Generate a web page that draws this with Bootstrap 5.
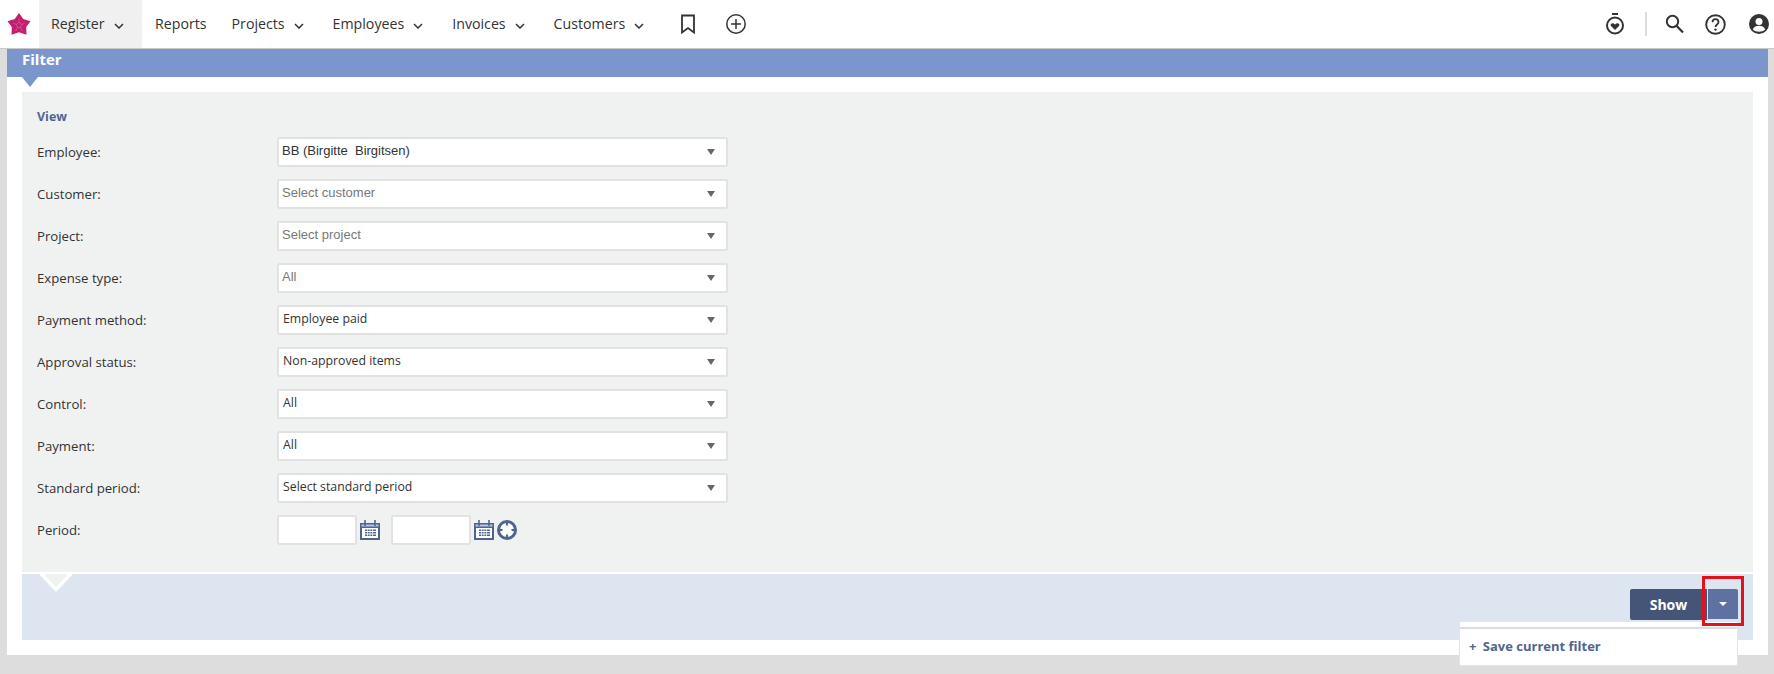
<!DOCTYPE html>
<html lang="en">
<head>
<meta charset="utf-8">
<title>Filter</title>
<link href="https://cdn.jsdelivr.net/npm/bootstrap@5.3.0/dist/css/bootstrap.min.css" rel="stylesheet">
<style>
html,body{height:674px;overflow:hidden}
body{background:#ddd;font-family:"Open Sans",sans-serif;font-size:13px;color:#333}
.topbar{height:49px;background:#fff;border-bottom:1px solid #c8c8c8;padding:0}
.logo-cell{width:39px;height:48px;padding-left:7px}
.top-item{height:48px;padding:0 13px;font-size:14.2px;color:#333;text-decoration:none;white-space:nowrap;gap:9px}
.top-item.has-menu{padding-right:16px}
.top-item.plain-item{padding-right:12px}
.top-item.active-item{background:#f0f0f0;padding:0 13px 0 12px;width:103px}
.chev{width:10px;height:6px;margin-top:3px;flex:none}
.glyph{color:#333;flex:none}
.vsep{width:2px;height:24px;background:#ddd}
.sheet{margin:0 6px 0 7px;height:606px;background:#fff;padding-bottom:15px}
.sheet-head{height:28px;background:#7b96cc;color:#fff;font-weight:700;font-size:15px;padding-left:15px;line-height:20px}
.head-tip{width:0;height:0;border-left:8px solid transparent;border-right:8px solid transparent;border-top:10px solid #7b96cc;margin-left:15px}
.filter-box{margin:5px 15px 0 15px;background:#f0f2f2;height:480px;padding:16px 15px 0 15px}
.view-title{color:#4f6590;font-weight:700;font-size:12.5px;line-height:17px;margin-bottom:12px}
.frow{height:30px;margin-bottom:12px}
.flabel{width:240px;font-size:13.2px;color:#333;padding-top:6px}
.fsel{width:451px;height:30px;padding:0 30px 2px 3px;border:2px solid #e2e2e2;border-radius:2px;font-family:"Liberation Sans",sans-serif;font-size:13px;color:#333;background-color:#fff;background-image:url("data:image/svg+xml,%3csvg xmlns='http://www.w3.org/2000/svg' viewBox='0 0 8 6'%3e%3cpath fill='%23666' d='M0 0h8L4 6z'/%3e%3c/svg%3e");background-position:right 11px center;background-size:8px 6px;box-shadow:none}
.fsel.ph{color:#777}
.fsel.osans{font-family:"Open Sans",sans-serif;font-size:12.3px;padding-left:4px;padding-bottom:1px}
.fdate{width:80px;height:30px;border:2px solid #e2e2e2;border-radius:2px;background:#fff;padding:0}
.cal{margin-left:3px;flex:none}
.foot-box{position:relative;margin:2px 15px 0 15px;height:66px;background:#dde6f0;padding:15px 15px 0 0}
.foot-tip{position:absolute;left:17px;top:0;width:0;height:0;border-left:17px solid transparent;border-right:17px solid transparent;border-top:18px solid #fff}
.foot-tip2{position:absolute;left:22px;top:0;width:0;height:0;border-left:12px solid transparent;border-right:12px solid transparent;border-top:13px solid #f0f2f2}
.btn-show{width:77px;height:31px;background:#445578;color:#fff;font-weight:700;font-size:14px;border:0;border-radius:2px 0 0 2px;padding:0}
.btn-caret{width:30px;height:30px;background:#5d72a1;border:0;border-radius:0 2px 0 0;margin-left:1px;padding:0}
.caret-shape{width:0;height:0;border-left:4px solid transparent;border-right:4px solid transparent;border-top:4px solid #fff}
.save-menu{position:absolute;right:15px;top:47px;width:279px;height:45px;background:#fff;border:1px solid #e4e4e4;border-radius:2px;padding-top:5px;z-index:2}
.save-line{border-top:2px solid #ddd}
.save-item{font-weight:700;font-size:13px;color:#4f6590;padding:8px 0 0 9px;line-height:18px;word-spacing:0}
.save-plus{margin-right:3px}
.redmark{position:absolute;right:9px;top:2px;width:42px;height:50px;border:3px solid #e1121a;z-index:3}
</style>
</head>
<body>
<nav class="topbar d-flex align-items-center">
  <div class="logo-cell d-flex align-items-center">
    <svg width="24" height="24" viewBox="0 0 24 24"><path fill="#c41f6e" d="M12 1 16.300 7 23.500 9.300 19.200 15 19.500 22.800 12 20.300 4.500 22.800 4.800 15 .5 9.300 7.700 7Z"/><path fill="none" stroke="#d97fac" stroke-width=".5" d="M12 10 9.500 12.500 10.500 15.500H13.500L14.500 12.500Z M12 10V7 M14.500 12.500 17.500 11.500 M13.500 15.500 15.500 19 M10.500 15.500 8.500 19 M9.500 12.500 6.500 11.500"/></svg>
  </div>
  <a class="top-item active-item d-flex align-items-center" href="#">Register<svg class="chev" viewBox="0 0 10 6"><path d="M1 1l4 4 4-4" fill="none" stroke="#333" stroke-width="1.500"/></svg></a>
  <a class="top-item plain-item d-flex align-items-center" href="#">Reports</a>
  <a class="top-item has-menu d-flex align-items-center" href="#">Projects<svg class="chev" viewBox="0 0 10 6"><path d="M1 1l4 4 4-4" fill="none" stroke="#333" stroke-width="1.500"/></svg></a>
  <a class="top-item has-menu d-flex align-items-center" href="#">Employees<svg class="chev" viewBox="0 0 10 6"><path d="M1 1l4 4 4-4" fill="none" stroke="#333" stroke-width="1.500"/></svg></a>
  <a class="top-item has-menu d-flex align-items-center" href="#">Invoices<svg class="chev" viewBox="0 0 10 6"><path d="M1 1l4 4 4-4" fill="none" stroke="#333" stroke-width="1.500"/></svg></a>
  <a class="top-item has-menu d-flex align-items-center" href="#">Customers<svg class="chev" viewBox="0 0 10 6"><path d="M1 1l4 4 4-4" fill="none" stroke="#333" stroke-width="1.500"/></svg></a>
  <svg class="glyph" style="margin-left:20px" width="16" height="20" viewBox="0 0 16 20"><path d="M2 1.500h12v17l-6-4.500-6 4.500z" fill="none" stroke="#333" stroke-width="1.800"/></svg>
  <svg class="glyph" style="margin-left:29px" width="22" height="22" viewBox="0 0 22 22"><circle cx="11" cy="11" r="9.200" fill="none" stroke="#333" stroke-width="1.500"/><path d="M11 6v10M6 11h10" stroke="#333" stroke-width="1.500"/></svg>
  <div class="ms-auto d-flex align-items-center">
    <svg class="glyph" width="20" height="22" viewBox="0 0 20 22"><path d="M7 1h6" stroke="#333" stroke-width="2"/><circle cx="10" cy="12.500" r="8" fill="none" stroke="#333" stroke-width="2"/><path d="M10 17l-4-4c-1.500-2 1.800-4 4-1.500 2.200-2.500 5.500-.5 4 1.500z" fill="#333"/></svg>
    <span class="vsep" style="margin-left:20px"></span>
    <svg class="glyph" style="margin-left:18px" width="19" height="20" viewBox="0 0 19 20"><circle cx="7.500" cy="7.500" r="5.700" fill="none" stroke="#333" stroke-width="2"/><path d="M11.500 11.800 18 18.500" stroke="#333" stroke-width="2.200"/></svg>
    <svg class="glyph" style="margin-left:21px" width="21" height="21" viewBox="0 0 21 21"><circle cx="10.500" cy="10.500" r="9.300" fill="none" stroke="#333" stroke-width="1.900"/><path d="M7.500 8.200c0-4 6-4 6 0 0 2.300-3 2.300-3 4.800" fill="none" stroke="#333" stroke-width="1.800"/><circle cx="10.500" cy="15.600" r="1.200" fill="#333"/></svg>
    <svg class="glyph" style="margin-left:23px;margin-right:5px" width="20" height="20" viewBox="0 0 20 20"><circle cx="10" cy="10" r="10" fill="#333"/><circle cx="10" cy="7.500" r="3.500" fill="#fff"/><path d="M3.800 15.500c1-2.800 3.500-3.800 6.200-3.800s5.200 1 6.200 3.800c-3 3-9.400 3-12.400 0z" fill="#fff"/></svg>
  </div>
</nav>

<main class="sheet">
  <div class="sheet-head">Filter</div>
  <div class="head-tip"></div>
  <section class="filter-box" style="margin-top:5px">
    <div class="view-title">View</div>
    <div class="frow d-flex"><label class="flabel">Employee:</label><select class="form-select fsel"><option>BB (Birgitte&nbsp; Birgitsen)</option></select></div>
    <div class="frow d-flex"><label class="flabel">Customer:</label><select class="form-select fsel ph"><option>Select customer</option></select></div>
    <div class="frow d-flex"><label class="flabel">Project:</label><select class="form-select fsel ph"><option>Select project</option></select></div>
    <div class="frow d-flex"><label class="flabel">Expense type:</label><select class="form-select fsel ph"><option>All</option></select></div>
    <div class="frow d-flex"><label class="flabel">Payment method:</label><select class="form-select fsel osans"><option>Employee paid</option></select></div>
    <div class="frow d-flex"><label class="flabel">Approval status:</label><select class="form-select fsel osans"><option>Non-approved items</option></select></div>
    <div class="frow d-flex"><label class="flabel">Control:</label><select class="form-select fsel osans"><option>All</option></select></div>
    <div class="frow d-flex"><label class="flabel">Payment:</label><select class="form-select fsel osans"><option>All</option></select></div>
    <div class="frow d-flex"><label class="flabel">Standard period:</label><select class="form-select fsel osans"><option>Select standard period</option></select></div>
    <div class="frow d-flex align-items-start">
      <label class="flabel">Period:</label>
      <input class="fdate" type="text" aria-label="From">
      <svg class="cal" style="margin-top:5px" width="20" height="20" viewBox="0 0 20 20"><path fill="#4f6590" d="M0 3h20v17H0z"/><path fill="#b9c6de" d="M1.500 4.500h17v2h-17z"/><path fill="#fff" d="M2 8h16v10H2z"/><path stroke="#4f6590" stroke-width="1.600" d="M5 0v6M15 0v6"/><path fill="#4f6590" d="M5 9.500h11v1.500H5zM5 12h11v1.500H5zM5 14.500h11V16H5z"/><path stroke="#fff" stroke-width=".7" d="M7.500 9v8M10 9v8M12.500 9v8"/></svg>
      <input class="fdate" style="margin-left:11px" type="text" aria-label="To">
      <svg class="cal" style="margin-top:5px" width="20" height="20" viewBox="0 0 20 20"><path fill="#4f6590" d="M0 3h20v17H0z"/><path fill="#b9c6de" d="M1.500 4.500h17v2h-17z"/><path fill="#fff" d="M2 8h16v10H2z"/><path stroke="#4f6590" stroke-width="1.600" d="M5 0v6M15 0v6"/><path fill="#4f6590" d="M5 9.500h11v1.500H5zM5 12h11v1.500H5zM5 14.500h11V16H5z"/><path stroke="#fff" stroke-width=".7" d="M7.500 9v8M10 9v8M12.500 9v8"/></svg>
      <svg style="margin:5px 0 0 3px" width="20" height="20" viewBox="0 0 20 20"><circle cx="10" cy="10" r="8.500" fill="#fff" stroke="#4f6590" stroke-width="3"/><path d="M10 2v3.500M10 14.500V18M2 10h3.500M14.500 10H18" stroke="#4f6590" stroke-width="2"/></svg>
    </div>
  </section>
  <section class="foot-box d-flex justify-content-end align-items-start">
    <span class="foot-tip"></span><span class="foot-tip2"></span>
    <button class="btn btn-show" type="button">Show</button>
    <button class="btn btn-caret d-flex align-items-center justify-content-center" type="button"><span class="caret-shape"></span></button>
    <div class="save-menu"><div class="save-line"></div><div class="save-item"><span class="save-plus">+</span> Save current filter</div></div>
    <span class="redmark"></span>
  </section>
</main>
<script src="https://cdn.jsdelivr.net/npm/bootstrap@5.3.0/dist/js/bootstrap.bundle.min.js"></script>
</body>
</html>
